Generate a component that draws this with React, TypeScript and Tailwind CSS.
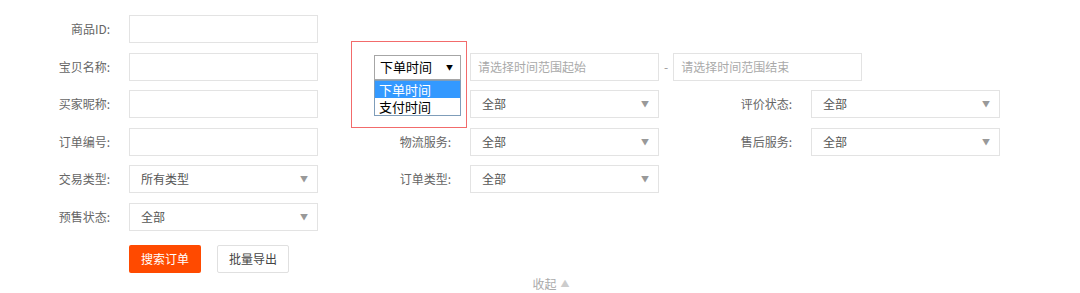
import React from 'react';

const font = { fontFamily: '"Microsoft YaHei", "Noto Sans CJK SC", "Liberation Sans", sans-serif' };

const Label: React.FC<{ text?: string }> = ({ text }) => (
  <span className="w-[110px] shrink-0 text-right text-[12px] text-[#666]">{text}</span>
);

const TextInput: React.FC<{ placeholder?: string }> = ({ placeholder }) => (
  <div className="flex h-[28px] w-[189px] items-center border border-[#e3e3e3] px-[7px] text-[12px] text-[#aaa]">
    {placeholder}
  </div>
);

const Select: React.FC<{ value: string }> = ({ value }) => (
  <div className="flex h-[28px] w-[189px] items-center justify-between border border-[#e3e3e3] pl-[11px] pr-[9px] text-[12px] text-[#555]">
    <span>{value}</span>
    <span className="text-[8px] text-[#999]">▼</span>
  </div>
);

const Field: React.FC<{ label?: string; children: React.ReactNode }> = ({ label, children }) => (
  <div className="flex w-[341px] shrink-0 items-center">
    <Label text={label} />
    <div className="ml-[19px]">{children}</div>
  </div>
);

export default function App() {
  return (
    <div className="relative h-[293px] w-[1080px] bg-white" style={font}>
      <div className="flex flex-col gap-[9.5px] pt-[15px]">
        <div className="flex">
          <Field label="商品ID:"><TextInput /></Field>
        </div>

        <div className="flex">
          <Field label="宝贝名称:"><TextInput /></Field>
          <div className="relative flex items-center">
            <div className="w-[129px]" />
            <TextInput placeholder="请选择时间范围起始" />
            <span className="mx-[5px] text-[12px] text-[#999]">-</span>
            <TextInput placeholder="请选择时间范围结束" />

            {/* open native select */}
            <div className="absolute left-[33px] top-[2px] w-[87px]">
              <div className="flex h-[25px] items-center justify-between border border-[#a6a6a6] bg-white pl-[5px] pr-[7px] text-[13px] text-black">
                <span>下单时间</span>
                <span className="text-[7px]">▼</span>
              </div>
              <div className="border border-[#7f9db9] bg-white text-[13px] leading-[17px] text-black">
                <div className="bg-[#3399ff] pl-[4px] text-white">下单时间</div>
                <div className="pl-[4px]">支付时间</div>
              </div>
            </div>
            {/* annotation box */}
            <div className="pointer-events-none absolute left-[10px] top-[-12px] h-[87px] w-[116px] border border-[#f26b6b]" />
          </div>
        </div>

        <div className="flex">
          <Field label="买家昵称:"><TextInput /></Field>
          <Field><Select value="全部" /></Field>
          <Field label="评价状态:"><Select value="全部" /></Field>
        </div>

        <div className="flex">
          <Field label="订单编号:"><TextInput /></Field>
          <Field label="物流服务:"><Select value="全部" /></Field>
          <Field label="售后服务:"><Select value="全部" /></Field>
        </div>

        <div className="flex">
          <Field label="交易类型:"><Select value="所有类型" /></Field>
          <Field label="订单类型:"><Select value="全部" /></Field>
        </div>

        <div className="flex">
          <Field label="预售状态:"><Select value="全部" /></Field>
        </div>
      </div>

      <div className="ml-[129px] mt-[14px] flex gap-[16px]">
        <button className="h-[28px] w-[72px] rounded-[2px] bg-[#ff4a00] text-[12px] text-white">搜索订单</button>
        <button className="h-[28px] w-[72px] rounded-[2px] border border-[#e0e0e0] bg-white text-[12px] text-[#444]">批量导出</button>
      </div>

      <div className="mt-[2px] flex items-center justify-center pl-[22px] text-[12px] text-[#aaa]">
        <span>收起</span>
        <span className="ml-[4px] text-[9px] text-[#ccc]">▲</span>
      </div>
    </div>
  );
}
